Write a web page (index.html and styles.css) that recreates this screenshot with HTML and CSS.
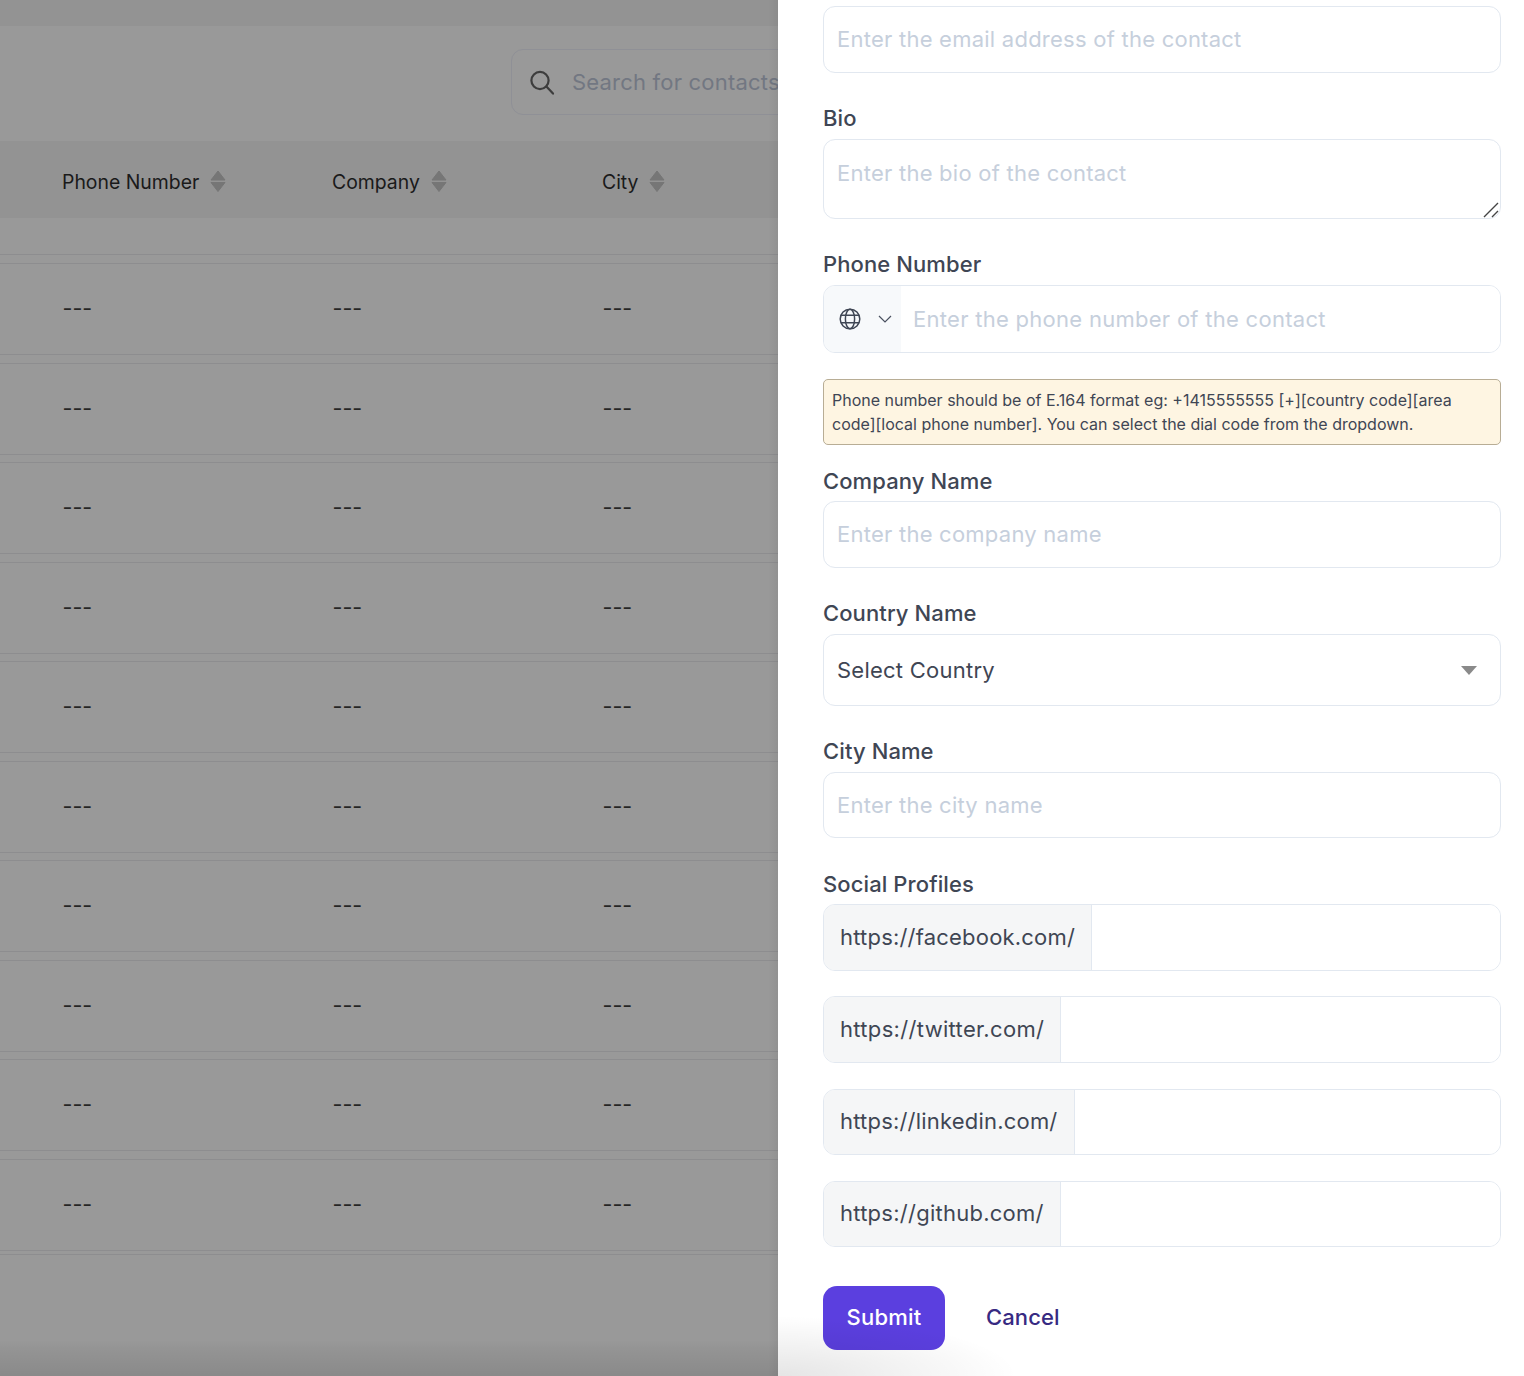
FILE: index.html
```html
<!DOCTYPE html>
<html lang="en">
<head>
<meta charset="utf-8">
<title>Contacts</title>
<link rel="stylesheet" href="styles.css">
</head>
<body>
<div class="page">
  <main class="backdrop">
    <div class="topbar"></div>
    <div class="toolbar">
      <label class="search">
        <svg class="search-icon" viewBox="0 0 26 26" width="26" height="26"><circle cx="11" cy="10.5" r="8.6"/><path d="M17.4 16.6 24 23.6"/></svg>
        <input class="search-input" type="text" placeholder="Search for contacts">
      </label>
    </div>
    <div class="thead">
      <div class="th">Phone Number <svg class="sort" viewBox="0 0 16 22" width="16" height="22"><path d="M8 1 15 10H1Z"/><path d="M1 12.500H15L8 21.500Z"/></svg></div>
      <div class="th">Company <svg class="sort" viewBox="0 0 16 22" width="16" height="22"><path d="M8 1 15 10H1Z"/><path d="M1 12.500H15L8 21.500Z"/></svg></div>
      <div class="th">City <svg class="sort" viewBox="0 0 16 22" width="16" height="22"><path d="M8 1 15 10H1Z"/><path d="M1 12.500H15L8 21.500Z"/></svg></div>
    </div>
    <div class="tbody">
      <div class="tr-first"></div>
      <div class="tr"><span>---</span><span>---</span><span>---</span></div>
      <div class="tr"><span>---</span><span>---</span><span>---</span></div>
      <div class="tr"><span>---</span><span>---</span><span>---</span></div>
      <div class="tr"><span>---</span><span>---</span><span>---</span></div>
      <div class="tr"><span>---</span><span>---</span><span>---</span></div>
      <div class="tr"><span>---</span><span>---</span><span>---</span></div>
      <div class="tr"><span>---</span><span>---</span><span>---</span></div>
      <div class="tr"><span>---</span><span>---</span><span>---</span></div>
      <div class="tr"><span>---</span><span>---</span><span>---</span></div>
      <div class="tr"><span>---</span><span>---</span><span>---</span></div>
      <div class="tr-last"></div>
    </div>
  </main>
  <aside class="panel">
    <form class="form">
      <input class="control email" type="text" placeholder="Enter the email address of the contact">

      <label class="label bio-label">Bio</label>
      <div class="bio-wrap">
        <textarea class="control bio" placeholder="Enter the bio of the contact"></textarea>
        <svg class="grip" viewBox="0 0 16 16" width="16" height="16"><path d="M1 15 15 1M9 15 15 9"/></svg>
      </div>

      <label class="label phone-label">Phone Number</label>
      <div class="phone">
        <div class="dial">
          <svg class="globe" viewBox="0 0 22 22" width="22" height="22"><circle cx="11" cy="11" r="9.800"/><ellipse cx="11" cy="11" rx="4.600" ry="9.800"/><path d="M2 7.300H20M2 14.700H20"/></svg>
          <svg class="chev" viewBox="0 0 14 8" width="14" height="8"><path d="M1 1 7 7 13 1"/></svg>
        </div>
        <input class="phone-input" type="text" placeholder="Enter the phone number of the contact">
      </div>

      <p class="notice">Phone number should be of E.164 format eg: +1415555555 [+][country code][area code][local phone number]. You can select the dial code from the dropdown.</p>

      <label class="label company-label">Company Name</label>
      <input class="control company" type="text" placeholder="Enter the company name">

      <label class="label country-label">Country Name</label>
      <div class="select-wrap">
        <select class="control select"><option>Select Country</option></select>
        <svg class="caret" viewBox="0 0 16 9" width="16" height="9"><path d="M0 0H16L8 9Z"/></svg>
      </div>

      <label class="label city-label">City Name</label>
      <input class="control city" type="text" placeholder="Enter the city name">

      <label class="label social-label">Social Profiles</label>
      <div class="social"><span class="prefix">https://facebook.com/</span><input class="social-input" type="text"></div>
      <div class="social s2"><span class="prefix">https://twitter.com/</span><input class="social-input" type="text"></div>
      <div class="social s3"><span class="prefix">https://linkedin.com/</span><input class="social-input" type="text"></div>
      <div class="social s4"><span class="prefix">https://github.com/</span><input class="social-input" type="text"></div>

      <div class="actions">
        <button class="submit" type="button">Submit</button>
        <a class="cancel">Cancel</a>
      </div>
    </form>
    <div class="panel-fade"></div>
  </aside>
</div>
</body>
</html>
```

FILE: styles.css
```css
* { box-sizing: border-box; }
html, body { margin: 0; height: 100%; }
body { font-family: Inter, "Liberation Sans", sans-serif; overflow: hidden; background: #999; }
.page { display: flex; width: 1524px; height: 1376px; overflow: hidden; }

.backdrop {
  position: relative;
  width: 778px;
  flex: none;
  overflow: hidden;
  background: #999;
}
.backdrop::after {
  content: "";
  position: absolute;
  inset: 0;
  background:
    linear-gradient(to right, transparent 768px, rgba(0,0,0,.05) 778px),
    linear-gradient(to bottom, transparent 1340px, rgba(0,0,0,.03) 1348px, rgba(0,0,0,.1) 1376px);
  pointer-events: none;
}
.topbar { height: 26px; background: #939393; }
.toolbar { display: flex; padding: 23px 0 0 511px; }
.search {
  flex: none;
  display: flex;
  align-items: center;
  width: 420px;
  height: 66px;
  padding-left: 18px;
  gap: 17px;
  border: 1px solid #8f9096;
  border-radius: 12px;
}
.search-icon { flex: none; fill: none; stroke: #3d3d3d; stroke-width: 2.2; stroke-linecap: round; margin-top: 1px; margin-left: -1px; }
.search-input {
  flex: 1;
  min-width: 0;
  border: 0;
  padding: 0 0 1px;
  background: transparent;
  font: 22px Inter, sans-serif;
  letter-spacing: .2px;
}
.search-input::placeholder { color: #727782; opacity: 1; }

.thead {
  display: grid;
  grid-template-columns: 270px 270px 200px;
  align-items: center;
  height: 77px;
  margin-top: 26px;
  padding: 4px 0 0 62px;
  background: #939393;
  font-size: 19.4px;
  color: #1a1a1a;
}
.th { display: flex; align-items: center; gap: 11px; }
.sort { fill: #767676; stroke: #767676; stroke-width: 1; stroke-linejoin: round; margin-top: -2px; }

.tbody { display: flex; flex-direction: column; }
.tr-first { height: 37px; border-bottom: 1px solid #8d8d8f; margin-bottom: 8px; }
.tr {
  display: grid;
  grid-template-columns: 270px 270px 200px;
  align-items: center;
  height: 92px;
  margin-bottom: 7.5px;
  padding: 0 0 2px 62.5px;
  border-top: 1px solid #8d8d8f;
  border-bottom: 1px solid #8d8d8f;
  font-size: 21.5px;
  color: #252525;
}
.tr-last { margin-top: -4px; border-top: 1px solid #8d8d8f; }

.panel { position: relative; flex: 1; background: #fff; overflow: hidden; }
.panel-fade {
  position: absolute;
  left: 0;
  bottom: 0;
  width: 260px;
  height: 90px;
  background: radial-gradient(ellipse 240px 60px at 0 100%, rgba(0,0,0,.1), rgba(0,0,0,.03) 70%, transparent);
  pointer-events: none;
}
.form { display: flex; flex-direction: column; padding: 6px 23px 0 45px; }

.label { font-size: 22px; line-height: 28px; font-weight: 450; letter-spacing: .1px; color: #3f4654; }
.control {
  display: block;
  width: 100%;
  margin: 0;
  padding: 0 13px 2px;
  background: #fff;
  border: 1px solid #e2e8f0;
  border-radius: 12px;
  font: 22px Inter, sans-serif;
  letter-spacing: .24px;
  color: #3f4654;
  outline: 0;
}
.control::placeholder, .phone-input::placeholder { color: #c6cfdc; opacity: 1; }
.email { height: 67px; }
.bio-label { margin-top: 31px; }
.bio-wrap { position: relative; margin-top: 7px; height: 80px; }
.bio { height: 80px; padding-top: 19px; resize: none; line-height: 28px; }
.grip { position: absolute; right: 2px; bottom: 1px; fill: none; stroke: #444; stroke-width: 1.4; }

.phone-label { margin-top: 31px; }
.phone {
  display: flex;
  height: 68px;
  margin-top: 7px;
  border: 1px solid #e2e8f0;
  border-radius: 12px;
  overflow: hidden;
}
.dial {
  flex: none;
  display: flex;
  align-items: center;
  width: 77px;
  padding-left: 15px;
  gap: 17px;
  background: #f7f9fb;
}
.globe { flex: none; fill: none; stroke: #3f4654; stroke-width: 1.5; margin-left: -.5px; }
.chev { flex: none; fill: none; stroke: #4a5160; stroke-width: 1.2; }
.phone-input {
  flex: 1;
  min-width: 0;
  border: 0;
  padding: 0 12px;
  outline: 0;
  font: 22px Inter, sans-serif;
  letter-spacing: .28px;
}
.notice {
  height: 66px;
  margin: 26px 0 0;
  padding: 8px;
  background: #fef5e2;
  border: 1px solid #b8ad95;
  border-radius: 5px;
  font-size: 16px;
  line-height: 24px;
  color: #3f4654;
}
.company-label { margin-top: 22px; }
.company { height: 67px; margin-top: 6px; }
.country-label { margin-top: 31px; }
.select-wrap { position: relative; margin-top: 7px; height: 72px; }
.select { height: 72px; padding-bottom: 0; appearance: none; -webkit-appearance: none; }
.caret { position: absolute; right: 24px; top: 32px; fill: #8a8a8a; }
.city-label { margin-top: 31px; }
.city { height: 66px; margin-top: 7px; padding-bottom: 1px; }
.social-label { margin-top: 32px; }

.social {
  display: flex;
  height: 67px;
  margin-top: 6px;
  border: 1px solid #e2e8f0;
  border-radius: 12px;
  overflow: hidden;
}
.s2 { margin-top: 25px; }
.s3 { margin-top: 26px; height: 66px; }
.s4 { margin-top: 26px; height: 66px; }
.prefix {
  flex: none;
  display: flex;
  align-items: center;
  padding: 0 16px 2px;
  background: #f5f6f7;
  border-right: 1px solid #e2e8f0;
  font-size: 22px;
  letter-spacing: .2px;
  color: #3f4654;
}
.s2 .prefix { letter-spacing: .33px; }
.s3 .prefix { letter-spacing: .2px; }
.s4 .prefix { letter-spacing: .25px; }
.social-input { flex: 1; min-width: 0; border: 0; outline: 0; }

.actions { display: flex; align-items: center; margin-top: 39px; }
.submit {
  width: 122px;
  height: 64px;
  padding: 0 0 2px;
  border: 0;
  border-radius: 14px;
  background: #5b3fdf;
  color: #fff;
  font: 450 22px Inter, sans-serif;
  letter-spacing: .2px;
}
.cancel { margin: -2px 0 0 41px; font-size: 22px; font-weight: 450; letter-spacing: .1px; color: #372a82; }
```
